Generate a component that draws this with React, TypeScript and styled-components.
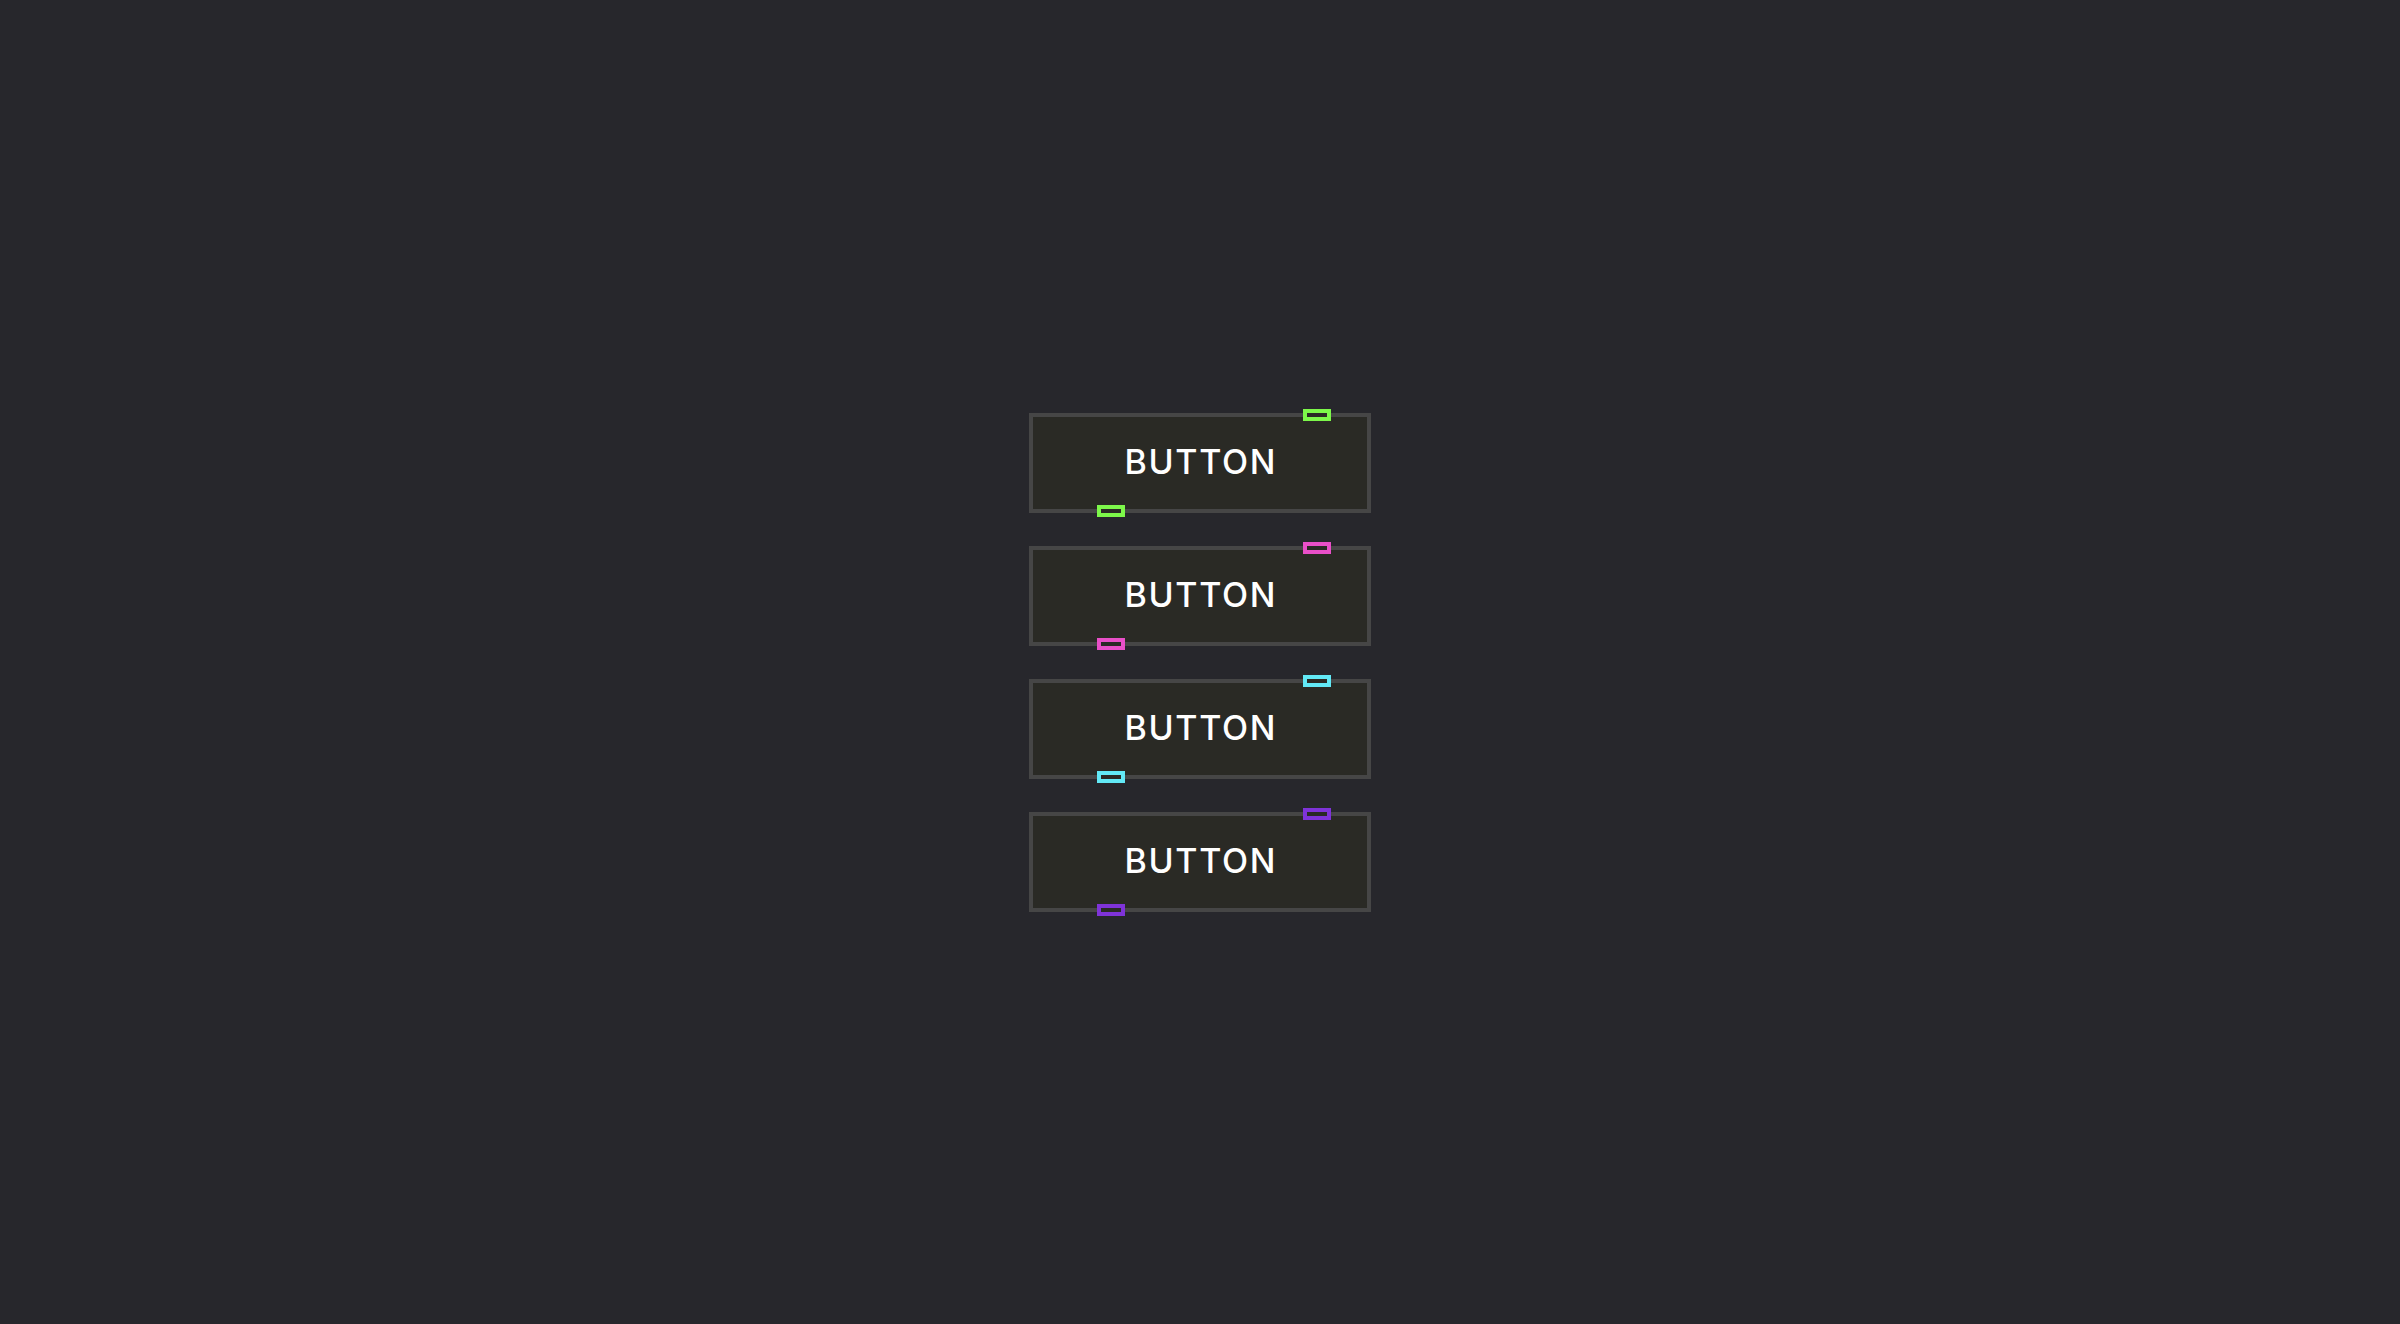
import styled, { createGlobalStyle } from "styled-components";

const GlobalStyle = createGlobalStyle`
  html, body {
    margin: 0;
    padding: 0;
    height: 100%;
    background-color: #27272c;
  }
  #root {
    height: 100%;
  }
`;

type MarkerProps = {
  $color: string;
  $side: "top" | "bottom";
};

const Page = styled.main`
  height: 100vh;
  display: flex;
  align-items: center;
  justify-content: center;
  background-color: #27272c;
`;

const Stack = styled.div`
  display: flex;
  flex-direction: column;
  gap: 33px;
`;

const Button = styled.button`
  position: relative;
  width: 342px;
  height: 100px;
  box-sizing: border-box;
  padding: 0 0 2px;
  border: 4px solid #464646;
  background-color: #2a2a25;
  color: #ffffff;
  font-family: Inter, "Noto Sans", sans-serif;
  font-size: 34px;
  font-weight: 500;
  letter-spacing: 0.05em;
  text-indent: 0.05em;
  cursor: pointer;
`;

const Marker = styled.span<MarkerProps>`
  position: absolute;
  left: ${(props) => (props.$side === "top" ? "270px" : "64px")};
  ${(props) => (props.$side === "top" ? "top: -8px;" : "bottom: -8px;")}
  width: 28px;
  height: 12px;
  box-sizing: border-box;
  border: 4px solid ${(props) => props.$color};
  background-color: #2a2a25;
`;

const colors = ["#7df84a", "#e94fc8", "#62e9f6", "#7f33d9"];

const App = () => {
  return (
    <>
      <GlobalStyle />
      <Page>
        <Stack>
          {colors.map((color) => (
            <Button key={color} type="button">
              BUTTON
              <Marker $color={color} $side="top" />
              <Marker $color={color} $side="bottom" />
            </Button>
          ))}
        </Stack>
      </Page>
    </>
  );
};

export default App;
